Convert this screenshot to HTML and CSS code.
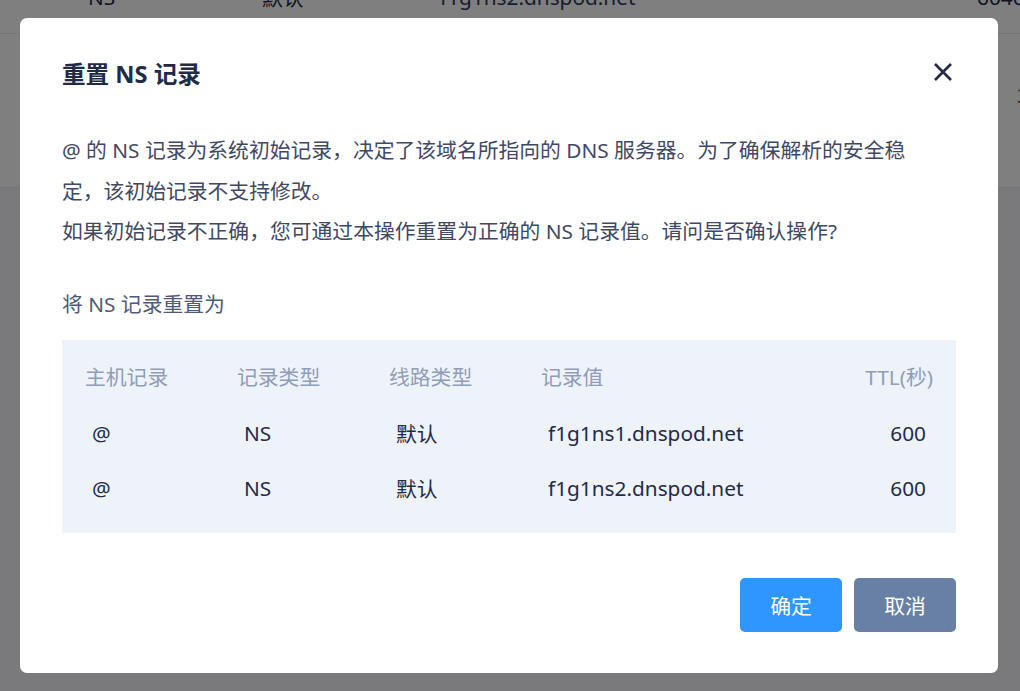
FILE: index.html
```html
<!DOCTYPE html>
<html lang="zh-CN">
<head>
<meta charset="utf-8">
<title>重置 NS 记录</title>
<link rel="stylesheet" href="styles.css">
</head>
<body>
<div class="page">
  <div class="bg-row bg-row-first">
    <span class="bg-cell c1">NS</span>
    <span class="bg-cell c2">默认</span>
    <span class="bg-cell c3">f1g1ns2.dnspod.net</span>
    <span class="bg-cell c4">6040</span>
  </div>
  <div class="bg-row bg-row-second">
    <span class="bg-edge">3</span>
  </div>
  <div class="bg-rest"></div>
</div>

<div class="overlay">
  <div class="modal">
    <div class="modal-head">
      <h2 class="modal-title">重置 NS 记录</h2>
      <svg class="close" width="20" height="20" viewBox="0 0 20 20" aria-label="关闭">
        <path d="M2 2 L18 18 M18 2 L2 18" stroke="#222a45" stroke-width="2.6" stroke-linecap="butt" fill="none"/>
      </svg>
    </div>
    <div class="modal-body">
      <p class="desc">@ 的 NS 记录为系统初始记录，决定了该域名所指向的 DNS 服务器。为了确保解析的安全稳定，该初始记录不支持修改。</p>
      <p class="desc">如果初始记录不正确，您可通过本操作重置为正确的 NS 记录值。请问是否确认操作?</p>
      <p class="sub">将 NS 记录重置为</p>
      <div class="records">
        <div class="rec-row rec-head">
          <span>主机记录</span>
          <span>记录类型</span>
          <span>线路类型</span>
          <span>记录值</span>
          <span class="ttl">TTL(秒)</span>
        </div>
        <div class="rec-list">
          <div class="rec-row rec-data">
            <span>@</span>
            <span>NS</span>
            <span>默认</span>
            <span>f1g1ns1.dnspod.net</span>
            <span class="ttl">600</span>
          </div>
          <div class="rec-row rec-data">
            <span>@</span>
            <span>NS</span>
            <span>默认</span>
            <span>f1g1ns2.dnspod.net</span>
            <span class="ttl">600</span>
          </div>
        </div>
      </div>
    </div>
    <div class="modal-foot">
      <button class="btn btn-primary">确定</button>
      <button class="btn btn-secondary">取消</button>
    </div>
  </div>
</div>
</body>
</html>
```

FILE: styles.css
```css
* {
  box-sizing: border-box;
}

html, body {
  margin: 0;
  padding: 0;
  height: 100%;
  overflow: hidden;
}

body {
  font-family: "Noto Sans", "Noto Sans CJK SC", sans-serif;
  background: #f4f5f8;
}

/* background page (under the mask) */
.page {
  margin-top: -40px;
}

.bg-row {
  background: #ffffff;
  border-bottom: 1px solid #e6e8ee;
  display: flex;
  align-items: center;
  overflow: hidden;
}

.bg-row-first {
  height: 74px;
  font-size: 20.8px;
  color: #1e2644;
}

.bg-row-second {
  height: 154px;
}

.bg-cell {
  white-space: nowrap;
  flex-shrink: 0;
}

.c1 { margin-left: 88px; width: 174px; }
.c2 { width: 178px; }
.c3 { width: 537px; color: #2a3a63; }
.c4 { width: 80px; }

.bg-edge {
  margin-left: 1017px;
  font-size: 20px;
  color: #6b4a1e;
  margin-top: -30px;
  flex-shrink: 0;
}

.bg-rest {
  height: 460px;
  background: #f4f5f9;
}

/* mask */
.overlay {
  position: fixed;
  inset: 0;
  background: rgba(0, 0, 0, 0.5);
  display: flex;
  align-items: center;
  justify-content: center;
  padding-right: 2px;
}

.modal {
  width: 978px;
  height: 655px;
  background: #ffffff;
  border-radius: 7px;
  padding: 40px 42px 41px;
  display: flex;
  flex-direction: column;
}

.modal-head {
  display: flex;
  justify-content: space-between;
  align-items: flex-start;
}

.modal-title {
  margin: 0;
  font-size: 23.6px;
  line-height: 32px;
  font-weight: 700;
  color: #222a45;
}

.close {
  margin-top: 4px;
  margin-right: 3px;
  display: block;
}

.modal-body {
  margin-top: 40px;
  flex: 1;
}

.desc {
  margin: 0;
  font-size: 20.8px;
  line-height: 40.5px;
  color: #3f4865;
  max-width: 858px;
}

.sub {
  margin: 32px 0 0;
  font-size: 20.8px;
  line-height: 40px;
  color: #505a76;
}

.records {
  margin-top: 16px;
  background: #eef2f9;
  padding: 16px 23px 17px;
}

.rec-row {
  display: grid;
  grid-template-columns: 152px 152px 152px 1fr auto;
  align-items: center;
  font-size: 20.8px;
  white-space: nowrap;
}

.rec-head {
  height: 40px;
  color: #8f9dba;
}

.rec-list {
  margin-top: 10px;
}

.rec-data {
  height: 55px;
  color: #232b49;
}

.rec-data span {
  padding-left: 7px;
}

.rec-data .ttl {
  padding-left: 0;
  padding-right: 7px;
}

.ttl {
  text-align: right;
}

.modal-foot {
  display: flex;
  justify-content: flex-end;
  gap: 12px;
}

.btn {
  width: 102px;
  height: 54px;
  border: none;
  border-radius: 5px;
  font-family: "Noto Sans", "Noto Sans CJK SC", sans-serif;
  font-size: 20.8px;
  color: #ffffff;
  padding: 0;
  cursor: pointer;
}

.btn-primary {
  background: #3096ff;
}

.btn-secondary {
  background: #6880a4;
}
```
